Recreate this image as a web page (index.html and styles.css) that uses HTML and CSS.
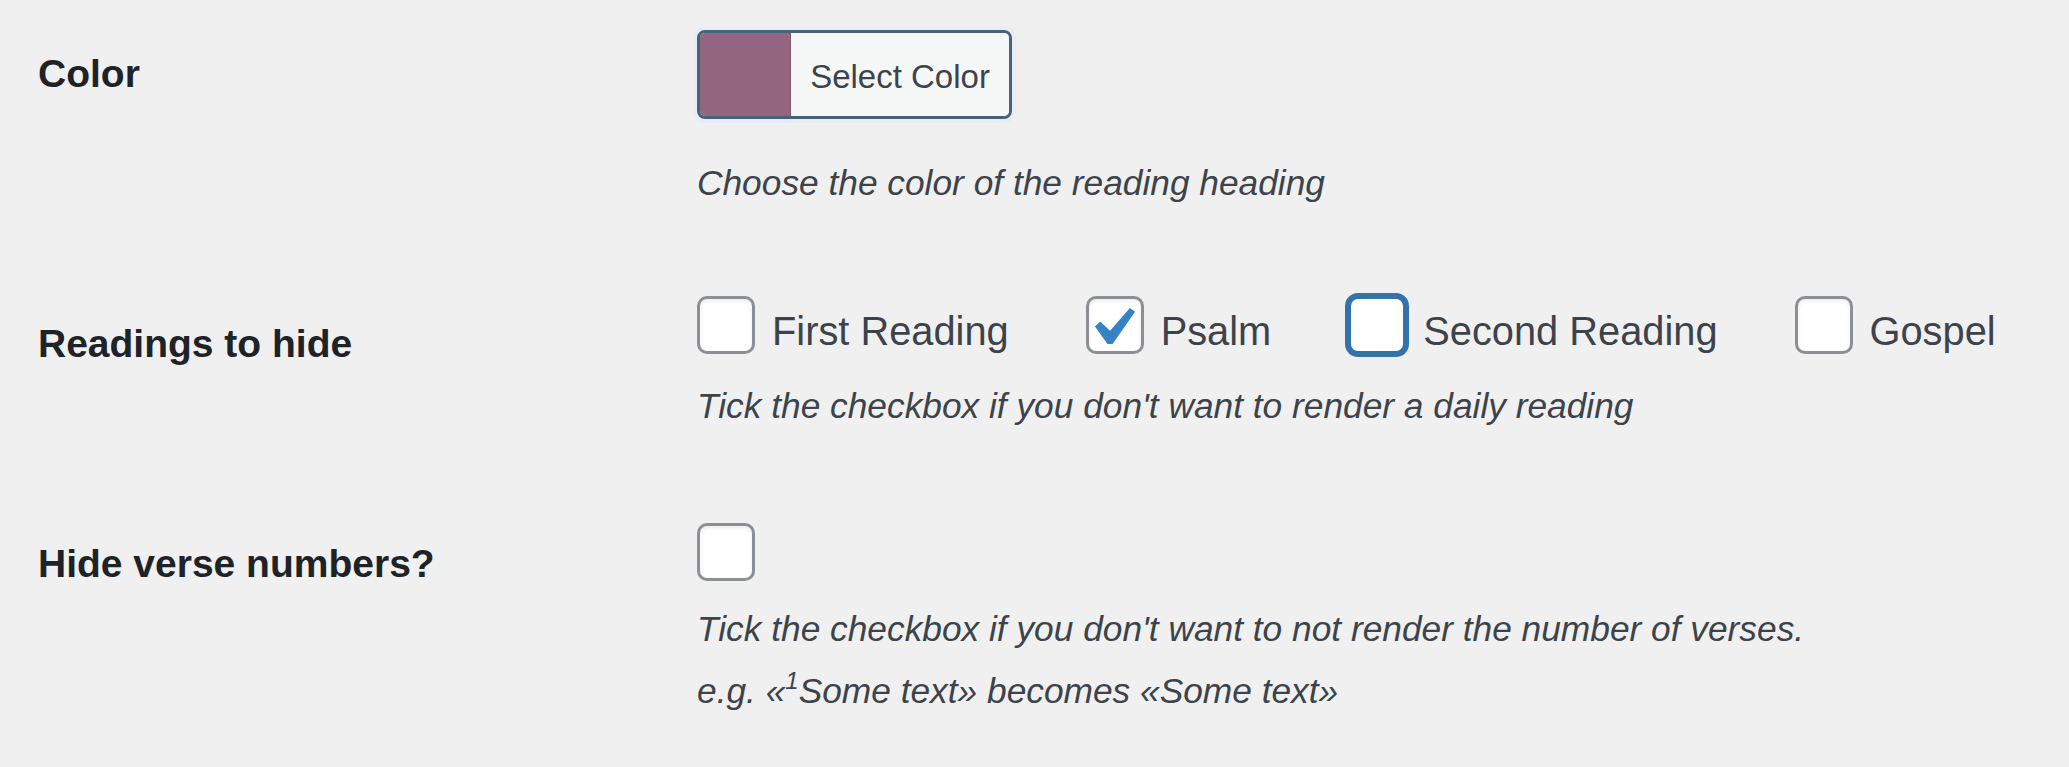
FILE: index.html
```html
<!DOCTYPE html>
<html lang="en">
<head>
  <meta charset="UTF-8">
  <title>Reading settings</title>
  <link rel="stylesheet" href="styles.css">
</head>
<body>

<table class="form-table">
  <tr class="row-color">
    <th>Color</th>
    <td>
      <div class="color-result">
        <span class="swatch"></span>
        <span class="color-text">Select Color</span>
      </div>
      <p class="description first">Choose the color of the reading heading</p>
    </td>
  </tr>

  <tr class="row-readings">
    <th>Readings to hide</th>
    <td>
      <div class="options">
        <label class="option"><span class="box"></span><span class="opt-text">First Reading</span></label>
        <label class="option">
          <span class="box">
            <svg viewBox="4.22 2.55 13.5 13.5" width="52" height="52"><path d="M14.83 4.89l1.34.94-5.81 8.38H9.02L5.78 9.67l1.34-1.25 2.57 2.4z" fill="#3582c4"/></svg>
          </span>
          <span class="opt-text">Psalm</span>
        </label>
        <label class="option"><span class="box focus"></span><span class="opt-text">Second Reading</span></label>
        <label class="option"><span class="box"></span><span class="opt-text">Gospel</span></label>
      </div>
      <p class="description">Tick the checkbox if you don't want to render a daily reading</p>
    </td>
  </tr>

  <tr class="row-verses">
    <th>Hide verse numbers?</th>
    <td>
      <span class="box"></span>
      <p class="description">Tick the checkbox if you don't want to not render the number of verses.
        <span class="example">e.g. &laquo;<sup>1</sup>Some text&raquo; becomes &laquo;Some text&raquo;</span></p>
    </td>
  </tr>
</table>

</body>
</html>
```

FILE: styles.css
```css
body {
  margin: 0;
  background-color: #f0f0f1;
  font-family: "Liberation Sans", Arial, sans-serif;
  color: #3c434a;
}
.form-table {
  margin-left: 38px;
  border-collapse: collapse;
  border-spacing: 0;
}
.form-table th,
.form-table td {
  vertical-align: top;
  text-align: left;
  padding: 0;
}
.form-table th {
  width: 659px;
  font-size: 39px;
  line-height: 1.3;
  font-weight: bold;
  color: #1d2327;
}
.form-table td {
  padding: 43px 0;
}
.row-color th {
  padding-top: 49px;
}
.row-color td {
  padding-top: 30px;
}
.row-readings th {
  padding-top: 66px;
}
.row-readings td {
  padding-bottom: 47px;
}
.row-verses th {
  padding-top: 59px;
}

/* colour picker button */
.color-result {
  display: flex;
  width: 315px;
  height: 89px;
  box-sizing: border-box;
  border: 3px solid #48627e;
  border-radius: 8px;
  overflow: hidden;
  box-shadow: 0 0 0 4px #e6edf3;
}
.swatch {
  width: 90px;
  background-color: #94667f;
  border-right: 1px solid #86566f;
}
.color-text {
  flex: 1;
  display: flex;
  align-items: center;
  justify-content: center;
  padding-top: 5px;
  background-color: #f6f7f7;
  font-size: 33px;
  color: #3c434a;
}

.description {
  margin: 22px 0 0;
  font-size: 35.3px;
  line-height: 1.5;
  font-style: italic;
  color: #3c434a;
}
.description.first {
  margin-top: 38px;
}
.example {
  display: block;
  margin-top: 9px;
}
.example sup {
  font-size: 68%;
  line-height: 0;
  vertical-align: 0.6em;
}

/* checkboxes */
.options {
  display: flex;
  gap: 77px;
  align-items: flex-start;
}
.option {
  display: flex;
  gap: 17px;
  align-items: flex-start;
}
.opt-text {
  margin-top: 10px;
  font-size: 39.8px;
  line-height: 1.3;
  color: #3c434a;
}
.box {
  display: block;
  width: 58px;
  height: 58px;
  box-sizing: border-box;
  border: 3px solid #8c8f94;
  border-radius: 10px;
  background: #fff;
  box-shadow: inset 0 2px 4px rgba(0,0,0,0.08);
}
.box svg {
  display: block;
}
.box.focus {
  border-color: #3373ab;
  box-shadow: 0 0 0 3px #3373ab;
}
```
